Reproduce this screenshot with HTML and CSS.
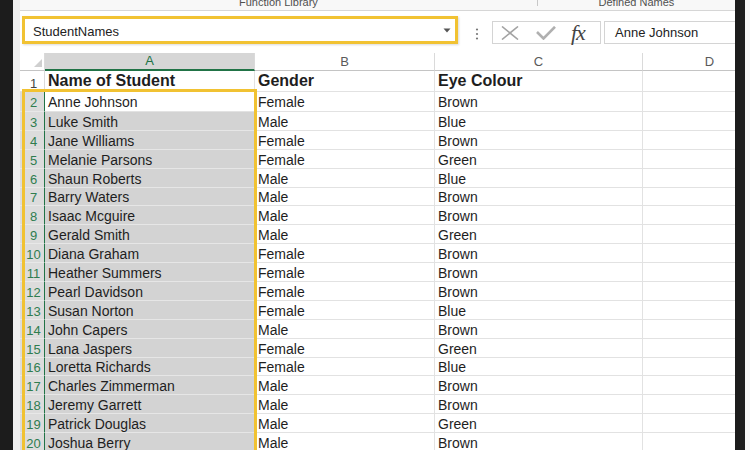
FILE: index.html
```html
<!DOCTYPE html>
<html lang="en">
<head>
<meta charset="utf-8">
<title>StudentNames</title>
<link rel="stylesheet" href="styles.css">
</head>
<body>
<div class="frame">
  <div class="bezel bezel-l"><span class="sr">.</span></div>
  <div class="main">
    <div class="ribbon">
      <div class="rgroup g1"><span class="rlabel">Function Library</span></div>
      <div class="rsep"></div>
      <div class="rgroup g2"><span class="rlabel">Defined Names</span></div>
    </div>
    <div class="fbar">
      <div class="namebox">
        <span class="nametext">StudentNames</span>
        <svg class="ddarrow" width="8" height="5" viewBox="0 0 8 5"><path d="M0.5 0.5 L7.5 0.5 L4 4.5 Z" fill="#555"/></svg>
      </div>
      <svg class="dots" width="4" height="12" viewBox="0 0 4 12"><circle cx="2" cy="1.5" r="1.1" fill="#777"/><circle cx="2" cy="6" r="1.1" fill="#777"/><circle cx="2" cy="10.5" r="1.1" fill="#777"/></svg>
      <div class="fxbox">
        <svg class="ico-x" width="18" height="14" viewBox="0 0 18 14"><path d="M1 0.5 L17 13.5 M17 0.5 L1 13.5" stroke="#a3a3a3" stroke-width="1.6" fill="none"/></svg>
        <svg class="ico-ok" width="20" height="14" viewBox="0 0 20 14"><path d="M1 6 L7.5 12.5 L19 0.8" stroke="#b0b0b0" stroke-width="2.6" fill="none"/></svg>
        <span class="fx">fx</span>
      </div>
      <div class="finput">Anne Johnson</div>
    </div>
    <div class="sheet">
      <div class="grid">
        <div class="corner"><svg width="8" height="8" viewBox="0 0 8 8"><path d="M8 0 L8 8 L0 8 Z" fill="#cfcfcf"/></svg></div>
        <div class="ch chsel">A</div>
        <div class="ch">B</div>
        <div class="ch">C</div>
        <div class="ch">D</div>

        <div class="rh r1">1</div>
        <div class="c r1 hd">Name of Student</div>
        <div class="c r1 hd">Gender</div>
        <div class="c r1 hd">Eye Colour</div>
        <div class="c r1"></div>

        <div class="rh rs r2">2</div>
        <div class="c r2 active">Anne Johnson</div>
        <div class="c r2">Female</div>
        <div class="c r2">Brown</div>
        <div class="c r2"></div>

        <div class="rh rs">3</div><div class="c sel">Luke Smith</div><div class="c">Male</div><div class="c">Blue</div><div class="c"></div>
        <div class="rh rs">4</div><div class="c sel">Jane Williams</div><div class="c">Female</div><div class="c">Brown</div><div class="c"></div>
        <div class="rh rs">5</div><div class="c sel">Melanie Parsons</div><div class="c">Female</div><div class="c">Green</div><div class="c"></div>
        <div class="rh rs">6</div><div class="c sel">Shaun Roberts</div><div class="c">Male</div><div class="c">Blue</div><div class="c"></div>
        <div class="rh rs">7</div><div class="c sel">Barry Waters</div><div class="c">Male</div><div class="c">Brown</div><div class="c"></div>
        <div class="rh rs">8</div><div class="c sel">Isaac Mcguire</div><div class="c">Male</div><div class="c">Brown</div><div class="c"></div>
        <div class="rh rs">9</div><div class="c sel">Gerald Smith</div><div class="c">Male</div><div class="c">Green</div><div class="c"></div>
        <div class="rh rs">10</div><div class="c sel">Diana Graham</div><div class="c">Female</div><div class="c">Brown</div><div class="c"></div>
        <div class="rh rs">11</div><div class="c sel">Heather Summers</div><div class="c">Female</div><div class="c">Brown</div><div class="c"></div>
        <div class="rh rs">12</div><div class="c sel">Pearl Davidson</div><div class="c">Female</div><div class="c">Brown</div><div class="c"></div>
        <div class="rh rs">13</div><div class="c sel">Susan Norton</div><div class="c">Female</div><div class="c">Blue</div><div class="c"></div>
        <div class="rh rs">14</div><div class="c sel">John Capers</div><div class="c">Male</div><div class="c">Brown</div><div class="c"></div>
        <div class="rh rs">15</div><div class="c sel">Lana Jaspers</div><div class="c">Female</div><div class="c">Green</div><div class="c"></div>
        <div class="rh rs">16</div><div class="c sel">Loretta Richards</div><div class="c">Female</div><div class="c">Blue</div><div class="c"></div>
        <div class="rh rs">17</div><div class="c sel">Charles Zimmerman</div><div class="c">Male</div><div class="c">Brown</div><div class="c"></div>
        <div class="rh rs">18</div><div class="c sel">Jeremy Garrett</div><div class="c">Male</div><div class="c">Brown</div><div class="c"></div>
        <div class="rh rs">19</div><div class="c sel">Patrick Douglas</div><div class="c">Male</div><div class="c">Green</div><div class="c"></div>
        <div class="rh rs">20</div><div class="c sel">Joshua Berry</div><div class="c">Male</div><div class="c">Brown</div><div class="c"></div>
      </div>
      <div class="range-outline"></div>
    </div>
  </div>
  <div class="bezel bezel-r"><span class="sr">.</span></div>
  <div class="edge-r"><span class="sr">.</span></div>
</div>
</body>
</html>
```
FILE: styles.css
```css
html, body {
  margin: 0;
  padding: 0;
}
body {
  width: 750px;
  height: 450px;
  overflow: hidden;
  background: #f6f6f6;
  font-family: "Liberation Sans", Arial, sans-serif;
  color: #1e1e1e;
}
.frame {
  display: flex;
  align-items: stretch;
  height: 450px;
  width: 750px;
}
.bezel {
  flex: none;
  height: 450px;
  background-color: #1c1c1c;
  color: #1c1c1c;
  font-size: 1px;
}
.bezel-l {
  width: 13px;
}
.bezel-r {
  width: 10px;
}
.edge-r {
  width: 5px;
  flex: none;
  background: #f6f6f6;
  color: #f6f6f6;
  font-size: 1px;
}
.sr {
  opacity: 0;
}
.main {
  width: 715px;
  flex: none;
  display: flex;
  flex-direction: column;
  overflow: hidden;
  background: #fff;
  border-left: 7px solid #efefef;
}

/* ribbon */
.ribbon {
  height: 11px;
  flex: none;
  display: flex;
  background: #f8f8f8;
  border-bottom: 1px solid #d6d6d6;
  box-sizing: border-box;
  overflow: hidden;
}
.rgroup {
  display: flex;
  justify-content: center;
}
.g1 { width: 527px; }
.g2 { width: 201px; }
.rsep {
  width: 1px;
  height: 6px;
  background: #c8c8c8;
}
.rlabel {
  display: block;
  font-size: 11px;
  line-height: 11px;
  margin-top: -3px;
  color: #505050;
}

/* formula bar */
.fbar {
  height: 42px;
  flex: none;
  display: flex;
  align-items: flex-start;
  box-sizing: border-box;
  padding-top: 5px;
  padding-left: 2px;
  background: #fff;
}
.namebox {
  width: 436px;
  height: 28px;
  box-sizing: border-box;
  border: 3px solid #f1c232;
  display: flex;
  align-items: center;
  justify-content: space-between;
  padding: 3px 4px 0 8px;
  box-shadow: 1px 1px 2px rgba(0,0,0,0.15);
}
.nametext {
  font-size: 13px;
  color: #222;
}
.ddarrow {
  display: block;
  margin-bottom: 3px;
}
.dots {
  display: block;
  margin: 12px 0 0 17px;
}
.fxbox {
  width: 109px;
  height: 23px;
  box-sizing: border-box;
  border: 1px solid #d4d4d4;
  margin: 5px 0 0 13px;
  display: flex;
  align-items: center;
  padding-left: 8px;
}
.ico-x { display: block; margin-top: 1px; }
.ico-ok { display: block; margin-left: 17px; margin-top: 1px; }
.fx {
  font-family: "Liberation Serif", "Times New Roman", serif;
  font-style: italic;
  font-size: 22px;
  color: #444;
  margin-left: 15px;
  line-height: 20px;
  letter-spacing: -1px;
}
.finput {
  flex: 1;
  height: 23px;
  box-sizing: border-box;
  border: 1px solid #d4d4d4;
  border-right: none;
  margin: 5px 0 0 3px;
  padding-left: 10px;
  font-size: 13px;
  line-height: 21px;
  color: #222;
}

/* sheet */
.sheet {
  position: relative;
  flex: 1;
  overflow: hidden;
}
.grid {
  display: grid;
  grid-template-columns: 25px 210px 180px 208px 134px;
  grid-template-rows: 18px 21px 20px repeat(18, 18.9px);
}
.corner {
  background: #fff;
  border-right: 1px solid #dadada;
  border-bottom: 1px solid #c4c4c4;
  box-sizing: border-box;
  display: flex;
  align-items: flex-end;
  justify-content: flex-end;
  padding: 0 2px 3px 0;
}
.corner svg { display: block; }
.ch {
  box-sizing: border-box;
  border-right: 1px solid #dadada;
  border-bottom: 1px solid #c4c4c4;
  font-size: 13px;
  line-height: 17px;
  text-align: center;
  color: #5a5a5a;
  background: #fff;
}
.chsel {
  background: #d6d6d6;
  color: #217346;
  border-bottom: 2px solid #217346;
  line-height: 16px;
}
.rh {
  box-sizing: border-box;
  font-size: 13px;
  text-align: center;
  color: #444;
  background: #fff;
  border-right: 1px solid #dadada;
  border-bottom: 1px solid #e2e2e2;
  display: flex;
  align-items: flex-end;
  justify-content: center;
  line-height: 15px;
  padding-left: 3px;
}
.rh.rs {
  background: #dcdcdc;
  color: #2f7d4f;
  border-right: 1px solid #217346;
  border-bottom: 1px solid #e8e8e8;
}
.c {
  box-sizing: border-box;
  border-right: 1px solid #e2e2e2;
  border-bottom: 1px solid #e2e2e2;
  font-size: 14px;
  line-height: 15px;
  padding-left: 3px;
  display: flex;
  align-items: flex-end;
  white-space: nowrap;
  overflow: hidden;
  color: #1e1e1e;
  background: #fff;
}
.c.hd {
  font-weight: bold;
  font-size: 16px;
  line-height: 18px;
  padding-bottom: 1px;
}
.r2 { padding-bottom: 1px; }
.c.sel {
  background: #d3d3d3;
  border-bottom-color: #e6e6e6;
}
.c.active {
  background: #fff;
}
.range-outline {
  position: absolute;
  left: 2px;
  top: 36px;
  width: 235px;
  height: 420px;
  box-sizing: border-box;
  border: 3px solid #f1c232;
  pointer-events: none;
}
```
